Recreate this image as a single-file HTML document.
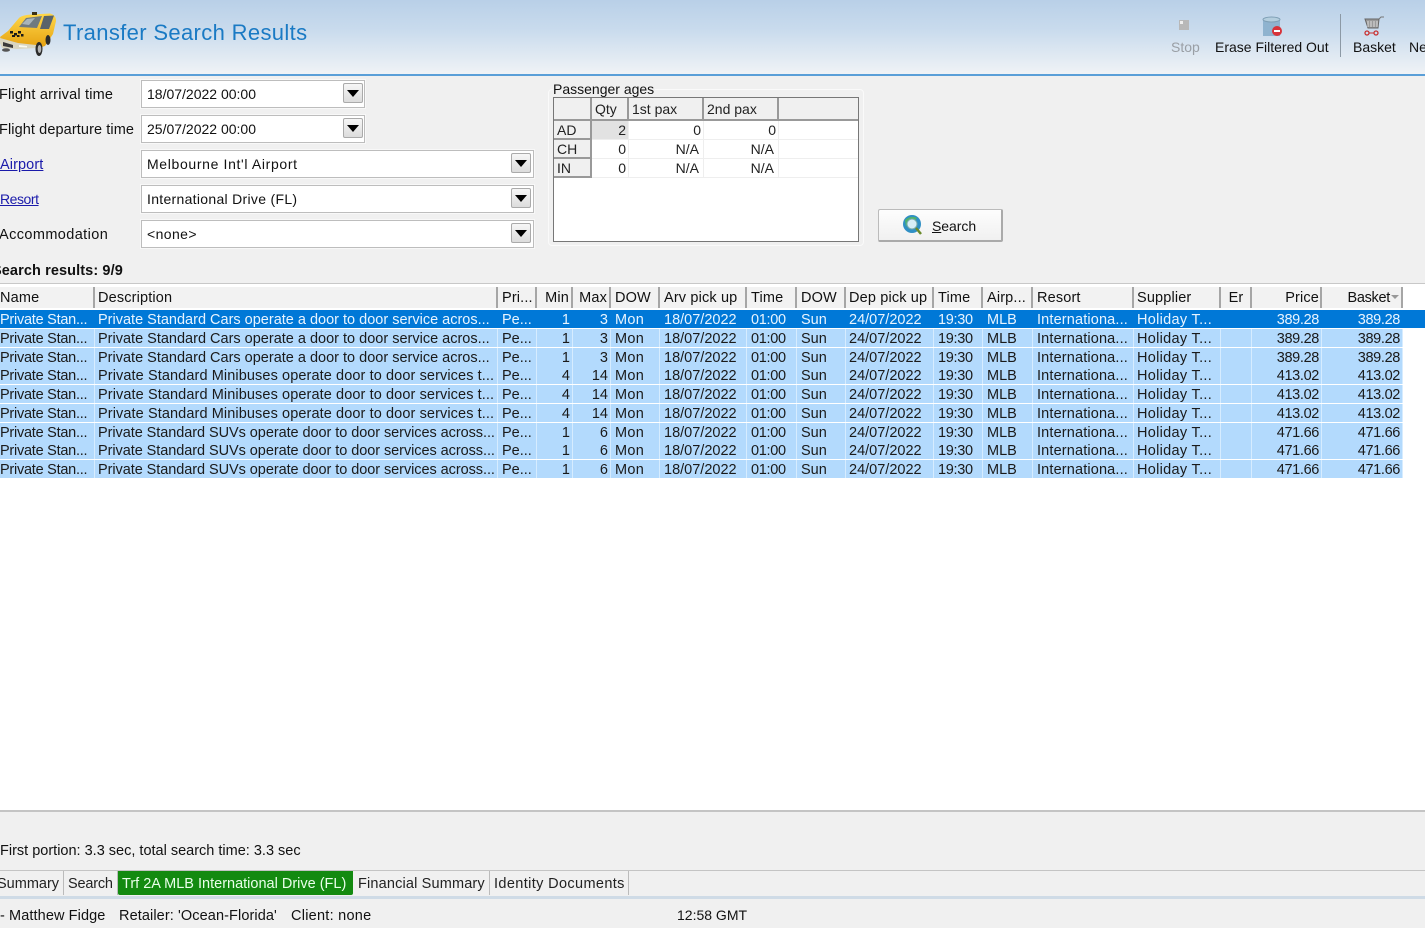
<!DOCTYPE html>
<html><head><meta charset="utf-8"><title>Transfer Search Results</title>
<style>
html,body{margin:0;padding:0}
body{width:1425px;height:928px;position:relative;overflow:hidden;background:#f0f0f0;font-family:"Liberation Sans",sans-serif;font-size:14px;color:#111;filter:blur(.3px)}
.a{position:absolute;white-space:nowrap;line-height:18px}
.m{font-size:14.5px;line-height:20px}
.top{position:absolute;left:0;top:0;width:1425px;height:74px;background:linear-gradient(#b9d0e8,#c9dbed 40%,#f0f3f6)}
.line{position:absolute;left:0;top:74px;width:1425px;height:2px;background:#5a9fd8}
.in{position:absolute;height:26px;background:#fff;border:1px solid #bdbdbd;box-shadow:0 0 0 1px #f8f8f8;line-height:26px;padding-left:5px;box-sizing:content-box}
.dd{position:absolute;right:2px;top:2px;width:20px;height:20px;background:linear-gradient(#f6f6f6,#dcdcdc);border:1px solid #aaa;border-radius:2px;box-sizing:border-box}
.dd.n{right:1px}
.dd:after{content:"";position:absolute;left:3px;top:6px;border-left:6px solid transparent;border-right:6px solid transparent;border-top:7px solid #000}
.lnk{color:#1a1aaa;text-decoration:underline}
.h,.r{position:absolute;left:0;width:1403px;display:flex;font-size:14.5px}
.h{top:287px;height:21px;line-height:23px;background:#f2f2f2;letter-spacing:.15px}
.r{height:18px;line-height:20px;background:#b3dafd;color:#1a1a1a}
.r.s{background:#0078d7;color:#e8f4ff;width:1425px}
.h span,.r span{display:block;box-sizing:border-box;white-space:nowrap;overflow:hidden;padding:0 3px 0 4px;flex-shrink:0}
.h span{border-right:2px solid #a6a6a6}
.r span{border-right:1px solid #d6ecff}
.s span{border-right-color:#0078d7!important}
.h span:nth-child(1),.r span:nth-child(1){width:95px;padding-left:0}
.r span:nth-child(1){letter-spacing:-.25px}
.h span:nth-child(2),.r span:nth-child(2){width:403px;padding-left:3px}
.mini span:nth-child(2){letter-spacing:.1px}
.suv span:nth-child(2){letter-spacing:-.06px}
.h span:nth-child(3),.r span:nth-child(3){width:39px}
.h span:nth-child(4),.r span:nth-child(4){width:36px;text-align:right;padding-right:2px}
.h span:nth-child(5),.r span:nth-child(5){width:38px;text-align:right;padding-right:2px}
.h span:nth-child(6),.r span:nth-child(6){width:49px}
.r span:nth-child(6){letter-spacing:.3px}
.h span:nth-child(7),.r span:nth-child(7){width:87px}
.h span:nth-child(8),.r span:nth-child(8){width:50px}
.r span:nth-child(8),.r span:nth-child(11){letter-spacing:-.3px}
.h span:nth-child(9),.r span:nth-child(9){width:49px}
.h span:nth-child(10),.r span:nth-child(10){width:88px;padding-left:3px}
.h span:nth-child(11),.r span:nth-child(11){width:49px}
.h span:nth-child(12),.r span:nth-child(12){width:50px}
.h span:nth-child(13),.r span:nth-child(13){width:101px}
.r span:nth-child(13){letter-spacing:.15px}
.h span:nth-child(14),.r span:nth-child(14){width:87px;padding-left:3px}
.r span:nth-child(14){letter-spacing:.3px}
.h span:nth-child(15),.r span:nth-child(15){width:31px}
.h span:nth-child(15){text-align:center}
.h span:nth-child(16),.r span:nth-child(16){width:70px;text-align:right;padding-right:2px}
.h span:nth-child(16){padding-right:1px}
.h span:nth-child(17),.r span:nth-child(17){width:81px;text-align:right;padding-right:2px}
.r span:nth-child(16),.r span:nth-child(17){letter-spacing:-.35px}
.g{position:absolute;background:#fff;border:1px solid #777}
.gh{position:absolute;background:#f0f0f0;border-right:2px solid #999;border-bottom:2px solid #999;box-sizing:border-box;line-height:22px;padding-left:3px;white-space:nowrap;color:#222}
.gc{position:absolute;text-align:right;line-height:18px;color:#222;white-space:nowrap;border-bottom:1px solid #eee;border-right:1px solid #eee;box-sizing:border-box;padding-right:2px}
.tab{position:absolute;top:871px;height:24px;line-height:27px;padding:0 4px;border-right:1px solid #bbb;box-sizing:border-box;white-space:nowrap;color:#222;font-size:14.5px}
</style></head><body>
<div class="top"></div><div class="line"></div>
<svg style="position:absolute;left:0;top:10px" width="58" height="48" viewBox="0 0 58 48">
<defs><linearGradient id="y" x1="0" y1="0" x2="0" y2="1"><stop offset="0" stop-color="#ffd84a"/><stop offset="1" stop-color="#e5a010"/></linearGradient></defs>
<path d="M0 27 L8 21 L19 8 Q22 5 32 4.500 L50 3.500 Q56 5 56 11 L53 24 L45 36 L38 38 L16 36 L2 32Z" fill="url(#y)"/>
<path d="M19 17 L26 8 L42 6 L37 18 Z" fill="#6f7a80"/><path d="M44 6 L54 5.500 L49 19 L40 19Z" fill="#59636a"/>
<path d="M22 14 L27 9 L35 8 L29 15Z" fill="#a8b4ba"/>
<rect x="32" y="2" width="5" height="3" fill="#3a3015"/>
<g fill="#191919"><rect x="10" y="21" width="3" height="2.500"/><rect x="14" y="23" width="3" height="2.500"/><rect x="18" y="21" width="3" height="2.500"/><rect x="21" y="24" width="2.500" height="2.500"/><rect x="12" y="25" width="3" height="2"/><rect x="17" y="25" width="2.500" height="2"/></g>
<path d="M0 28 L18 33 L36 35 L37 38 L17 39 L2 38 L0 33Z" fill="#d9d6c2"/>
<path d="M3 32 L13 35 L13 38 L3 36Z" fill="#3b3b3b"/><path d="M19 35 L27 36 L27 37.500 L19 37Z" fill="#fafaf0"/>
<ellipse cx="39" cy="39" rx="3.500" ry="7" fill="#2b2b2b"/><ellipse cx="39.500" cy="39" rx="1.800" ry="4" fill="#b5b5b5"/>
<ellipse cx="48" cy="30" rx="2.500" ry="5" fill="#2b2b2b"/>
<ellipse cx="6" cy="40" rx="4" ry="1.800" fill="#555"/>
</svg>
<div class="a" style="left:63px;top:20px;font-size:22px;line-height:26px;color:#1a7ac4;letter-spacing:.35px">Transfer Search Results</div>

<svg style="position:absolute;left:1178px;top:19px" width="13" height="12"><rect x="1" y="1" width="10" height="10" fill="#b8b8b8"/><rect x="2" y="2" width="3" height="3" fill="#eee"/></svg>
<div class="a" style="left:1171px;top:38px;color:#9a9fa5">Stop</div>
<svg style="position:absolute;left:1262px;top:16px" width="22" height="21"><path d="M1 3 H18 V20 H1Z" fill="#8fb3cf"/><ellipse cx="9.500" cy="3.500" rx="8.500" ry="2.500" fill="#b4cede" stroke="#7f9fb5"/><circle cx="15" cy="15" r="5" fill="#d8333a"/><rect x="12" y="14" width="6" height="2" fill="#fff"/></svg>
<div class="a" style="left:1215px;top:38px">Erase Filtered Out</div>
<div style="position:absolute;left:1340px;top:14px;width:1px;height:43px;background:#8c99a5"></div>
<svg style="position:absolute;left:1362px;top:14px" width="24" height="24" fill="none"><path d="M3 5 H17 L16 14 H6 Z" fill="#9a9a9a" stroke="#666"/><path d="M17 5 L19 3 H22" stroke="#777"/><path d="M6 7V13M9 7V13M12 7V13M15 7V13" stroke="#ddd"/><circle cx="5" cy="19" r="2" stroke="#c93030" stroke-width="1.300"/><circle cx="14" cy="19" r="2" stroke="#c93030" stroke-width="1.300"/><path d="M7 19H12" stroke="#c93030"/></svg>
<div class="a" style="left:1353px;top:38px">Basket</div>
<div class="a" style="left:1409px;top:38px">Ne</div>

<div class="a m" style="left:-1px;top:85px;letter-spacing:.2px">Flight arrival time</div>
<div class="a m" style="left:-1px;top:120px;letter-spacing:.1px">Flight departure time</div>
<div class="a lnk m" style="left:0;top:155px;letter-spacing:.1px">Airport</div>
<div class="a lnk" style="left:0;top:190px;letter-spacing:-.45px">Resort</div>
<div class="a m" style="left:-1px;top:225px;letter-spacing:.4px">Accommodation</div>

<div class="in" style="left:141px;top:80px;width:217px">18/07/2022 00:00<div class="dd n"></div></div>
<div class="in" style="left:141px;top:115px;width:217px">25/07/2022 00:00<div class="dd n"></div></div>
<div class="in" style="left:141px;top:150px;width:386px"><span style="letter-spacing:.65px">Melbourne Int'l Airport</span><div class="dd"></div></div>
<div class="in" style="left:141px;top:185px;width:386px"><span style="letter-spacing:.3px">International Drive (FL)</span><div class="dd"></div></div>
<div class="in" style="left:141px;top:220px;width:386px"><span style="letter-spacing:.4px">&lt;none&gt;</span><div class="dd"></div></div>

<div style="position:absolute;left:548px;top:89px;width:316px;height:157px;border:1px solid #fafafa;border-radius:4px;box-sizing:border-box"></div>
<div class="a" style="left:553px;top:80px;background:#f0f0f0;padding-right:1px">Passenger ages</div>
<div class="g" style="left:553px;top:97px;width:304px;height:143px">
<div class="gh" style="left:0;top:0;width:38px;height:23px"></div>
<div class="gh" style="left:38px;top:0;width:37px;height:23px">Qty</div>
<div class="gh" style="left:75px;top:0;width:75px;height:23px">1st pax</div>
<div class="gh" style="left:150px;top:0;width:75px;height:23px">2nd pax</div>
<div class="gh" style="left:225px;top:0;width:79px;height:23px;border-right:0"></div>
<div class="gh" style="left:0;top:23px;width:38px;height:19px;line-height:19px">AD</div>
<div class="gh" style="left:0;top:42px;width:38px;height:19px;line-height:19px">CH</div>
<div class="gh" style="left:0;top:61px;width:38px;height:19px;line-height:19px">IN</div>
<div class="gc" style="left:38px;top:23px;width:37px;height:19px;background:#e2e2e2">2</div>
<div class="gc" style="left:75px;top:23px;width:75px;height:19px">0</div>
<div class="gc" style="left:150px;top:23px;width:75px;height:19px">0</div>
<div class="gc" style="left:225px;top:23px;width:79px;height:19px;border-right:0"></div>
<div class="gc" style="left:38px;top:42px;width:37px;height:19px">0</div>
<div class="gc" style="left:75px;top:42px;width:75px;height:19px;padding-right:4px">N/A</div>
<div class="gc" style="left:150px;top:42px;width:75px;height:19px;padding-right:4px">N/A</div>
<div class="gc" style="left:225px;top:42px;width:79px;height:19px;border-right:0"></div>
<div class="gc" style="left:38px;top:61px;width:37px;height:19px">0</div>
<div class="gc" style="left:75px;top:61px;width:75px;height:19px;padding-right:4px">N/A</div>
<div class="gc" style="left:150px;top:61px;width:75px;height:19px;padding-right:4px">N/A</div>
<div class="gc" style="left:225px;top:61px;width:79px;height:19px;border-right:0"></div>
</div>

<div style="position:absolute;left:878px;top:209px;width:125px;height:33px;box-sizing:border-box;background:linear-gradient(#fdfdfd,#f0f0f0);border:1px solid #bbb;border-right:2px solid #aaa;border-bottom:2px solid #aaa;border-radius:2px"></div>
<svg style="position:absolute;left:901px;top:213px" width="24" height="24"><circle cx="11" cy="11" r="9" fill="#2f8fc4"/><path d="M4 7 Q10 2 16 5 L13 9 L7 8 L5 14Z" fill="#4fb36a"/><circle cx="11" cy="11" r="5" fill="#d8eef6" stroke="#7aa" stroke-width="1"/><path d="M15 15 L20 21" stroke="#6a8a2a" stroke-width="2.500"/></svg>
<div class="a" style="left:932px;top:217px;letter-spacing:-.05px"><u>S</u>earch</div>

<div class="a" style="left:-8px;top:262px;font-weight:bold;font-size:14.5px;letter-spacing:.1px">Search results: 9/9</div>
<div style="position:absolute;left:0;top:283px;width:1425px;height:1px;background:#c8c8c8"></div>
<div style="position:absolute;left:0;top:284px;width:1425px;height:526px;background:#fff"></div>

<div class="h"><span>Name</span><span>Description</span><span>Pri...</span><span>Min</span><span>Max</span><span>DOW</span><span>Arv pick up</span><span>Time</span><span>DOW</span><span>Dep pick up</span><span>Time</span><span>Airp...</span><span>Resort</span><span>Supplier</span><span>Er</span><span>Price</span><span style="position:relative;padding-right:11px;letter-spacing:-.3px">Basket<i style="position:absolute;right:2px;top:8px;border-left:4px solid transparent;border-right:4px solid transparent;border-top:4px solid #999"></i></span></div>

<div class="r s" style="top:310px"><span>Private Stan...</span><span>Private Standard Cars operate a door to door service acros...</span><span>Pe...</span><span>1</span><span>3</span><span>Mon</span><span>18/07/2022</span><span>01:00</span><span>Sun</span><span>24/07/2022</span><span>19:30</span><span>MLB</span><span>Internationa...</span><span>Holiday T...</span><span></span><span>389.28</span><span>389.28</span></div>
<div class="r" style="top:329px"><span>Private Stan...</span><span>Private Standard Cars operate a door to door service acros...</span><span>Pe...</span><span>1</span><span>3</span><span>Mon</span><span>18/07/2022</span><span>01:00</span><span>Sun</span><span>24/07/2022</span><span>19:30</span><span>MLB</span><span>Internationa...</span><span>Holiday T...</span><span></span><span>389.28</span><span>389.28</span></div>
<div class="r" style="top:348px"><span>Private Stan...</span><span>Private Standard Cars operate a door to door service acros...</span><span>Pe...</span><span>1</span><span>3</span><span>Mon</span><span>18/07/2022</span><span>01:00</span><span>Sun</span><span>24/07/2022</span><span>19:30</span><span>MLB</span><span>Internationa...</span><span>Holiday T...</span><span></span><span>389.28</span><span>389.28</span></div>
<div class="r mini" style="top:366px"><span>Private Stan...</span><span>Private Standard Minibuses operate door to door services t...</span><span>Pe...</span><span>4</span><span>14</span><span>Mon</span><span>18/07/2022</span><span>01:00</span><span>Sun</span><span>24/07/2022</span><span>19:30</span><span>MLB</span><span>Internationa...</span><span>Holiday T...</span><span></span><span>413.02</span><span>413.02</span></div>
<div class="r mini" style="top:385px"><span>Private Stan...</span><span>Private Standard Minibuses operate door to door services t...</span><span>Pe...</span><span>4</span><span>14</span><span>Mon</span><span>18/07/2022</span><span>01:00</span><span>Sun</span><span>24/07/2022</span><span>19:30</span><span>MLB</span><span>Internationa...</span><span>Holiday T...</span><span></span><span>413.02</span><span>413.02</span></div>
<div class="r mini" style="top:404px"><span>Private Stan...</span><span>Private Standard Minibuses operate door to door services t...</span><span>Pe...</span><span>4</span><span>14</span><span>Mon</span><span>18/07/2022</span><span>01:00</span><span>Sun</span><span>24/07/2022</span><span>19:30</span><span>MLB</span><span>Internationa...</span><span>Holiday T...</span><span></span><span>413.02</span><span>413.02</span></div>
<div class="r suv" style="top:423px"><span>Private Stan...</span><span>Private Standard SUVs operate door to door services across...</span><span>Pe...</span><span>1</span><span>6</span><span>Mon</span><span>18/07/2022</span><span>01:00</span><span>Sun</span><span>24/07/2022</span><span>19:30</span><span>MLB</span><span>Internationa...</span><span>Holiday T...</span><span></span><span>471.66</span><span>471.66</span></div>
<div class="r suv" style="top:441px"><span>Private Stan...</span><span>Private Standard SUVs operate door to door services across...</span><span>Pe...</span><span>1</span><span>6</span><span>Mon</span><span>18/07/2022</span><span>01:00</span><span>Sun</span><span>24/07/2022</span><span>19:30</span><span>MLB</span><span>Internationa...</span><span>Holiday T...</span><span></span><span>471.66</span><span>471.66</span></div>
<div class="r suv" style="top:460px"><span>Private Stan...</span><span>Private Standard SUVs operate door to door services across...</span><span>Pe...</span><span>1</span><span>6</span><span>Mon</span><span>18/07/2022</span><span>01:00</span><span>Sun</span><span>24/07/2022</span><span>19:30</span><span>MLB</span><span>Internationa...</span><span>Holiday T...</span><span></span><span>471.66</span><span>471.66</span></div>

<div style="position:absolute;left:0;top:810px;width:1425px;height:2px;background:#c4c4c4"></div>
<div class="a m" style="left:0;top:841px">First portion: 3.3 sec, total search time: 3.3 sec</div>
<div style="position:absolute;left:0;top:870px;width:1425px;height:1px;background:#c4c4c4"></div>
<div style="position:absolute;left:0;top:896px;width:1425px;height:3px;background:#cfdbe6"></div>
<div class="tab" style="left:-7px;width:71px">Summary</div>
<div class="tab" style="left:64px;width:54px;letter-spacing:-.2px">Search</div>
<div class="tab" style="left:118px;width:235px;background:#138a10;color:#eaffea;border:0;border-radius:0 0 2px 2px">Trf 2A MLB International Drive (FL)</div>
<div class="tab" style="left:354px;width:136px;letter-spacing:.16px">Financial Summary</div>
<div class="tab" style="left:490px;width:139px;letter-spacing:.37px">Identity Documents</div>
<div class="a m" style="left:0;top:906px;letter-spacing:.1px">- Matthew Fidge</div>
<div class="a m" style="left:119px;top:906px;letter-spacing:.1px">Retailer: 'Ocean-Florida'</div>
<div class="a m" style="left:291px;top:906px;letter-spacing:.25px">Client: none</div>
<div class="a" style="left:677px;top:906px">12:58 GMT</div>
</body></html>
